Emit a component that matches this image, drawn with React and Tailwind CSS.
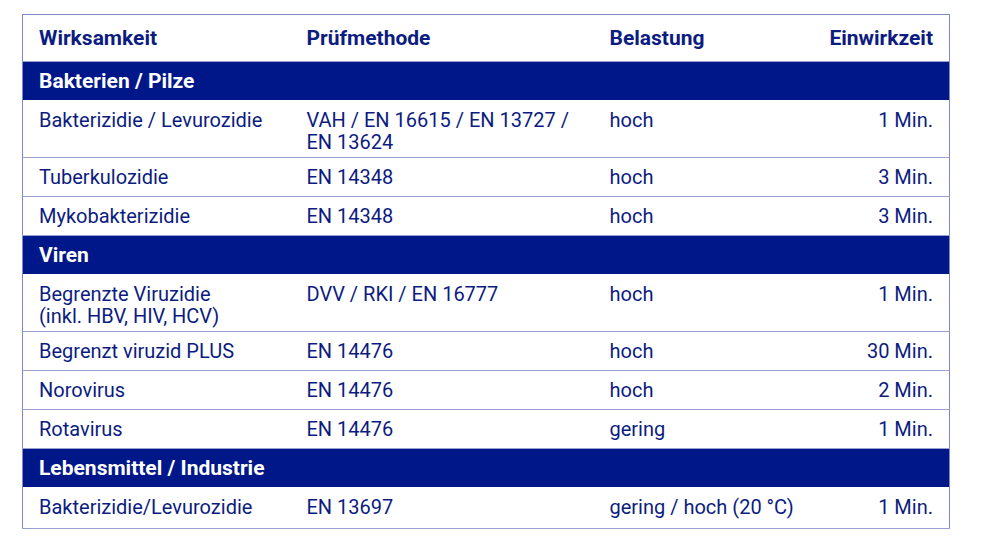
import React from 'react';

const sections = [
  {
    title: 'Bakterien / Pilze',
    rows: [
      ['Bakterizidie / Levurozidie', ['VAH / EN 16615 / EN 13727 /', 'EN 13624'], 'hoch', '1 Min.'],
      ['Tuberkulozidie', 'EN 14348', 'hoch', '3 Min.'],
      ['Mykobakterizidie', 'EN 14348', 'hoch', '3 Min.'],
    ],
  },
  {
    title: 'Viren',
    rows: [
      [['Begrenzte Viruzidie', '(inkl. HBV, HIV, HCV)'], 'DVV / RKI / EN 16777', 'hoch', '1 Min.'],
      ['Begrenzt viruzid PLUS', 'EN 14476', 'hoch', '30 Min.'],
      ['Norovirus', 'EN 14476', 'hoch', '2 Min.'],
      ['Rotavirus', 'EN 14476', 'gering', '1 Min.'],
    ],
  },
  {
    title: 'Lebensmittel / Industrie',
    rows: [['Bakterizidie/Levurozidie', 'EN 13697', 'gering / hoch (20 °C)', '1 Min.']],
  },
];

function Lines({ value }) {
  if (!Array.isArray(value)) return value;
  return value.map((line, i) => (
    <React.Fragment key={i}>
      {i > 0 && <br />}
      {line}
    </React.Fragment>
  ));
}

export default function App() {
  return (
    <div className="bg-white w-[1000px] h-[544px] pt-[14px] pl-[22px]" style={{ fontFamily: 'Roboto, "Liberation Sans", sans-serif' }}>
      <table className="w-[928px] border-collapse border border-[#7f88c4] text-[#0c1c80] text-[20px] leading-[22px]">
        <thead>
          <tr className="h-[47px] text-[21px] font-bold border-b border-[#9aa1d0]">
            <th className="w-[268px] pl-4 text-left">Wirksamkeit</th>
            <th className="w-[303px] pl-4 text-left">Prüfmethode</th>
            <th className="pl-4 text-left">Belastung</th>
            <th className="pr-4 text-right">Einwirkzeit</th>
          </tr>
        </thead>
        <tbody>
          {sections.map((s, si) => (
            <React.Fragment key={s.title}>
              <tr className="h-[38px] bg-[#00178a] text-white text-[21px] font-bold">
                <td colSpan={4} className="pl-4">{s.title}</td>
              </tr>
              {s.rows.map((r, i) => {
                const tall = Array.isArray(r[0]) || Array.isArray(r[1]);
                const last = si === sections.length - 1 && i === s.rows.length - 1;
                const h = tall ? 'h-[58px]' : last ? 'h-[42px]' : 'h-[39px]';
                const top = tall ? 'align-top pt-[9px]' : '';
                return (
                  <tr key={i} className={`${h} border-b border-[#9aa1d0] align-middle`}>
                    <td className={`pl-4 ${top}`}><Lines value={r[0]} /></td>
                    <td className={`pl-4 ${top}`}><Lines value={r[1]} /></td>
                    <td className={`pl-4 ${top}`}>{r[2]}</td>
                    <td className={`pr-4 text-right ${top}`}>{r[3]}</td>
                  </tr>
                );
              })}
            </React.Fragment>
          ))}
        </tbody>
      </table>
    </div>
  );
}
